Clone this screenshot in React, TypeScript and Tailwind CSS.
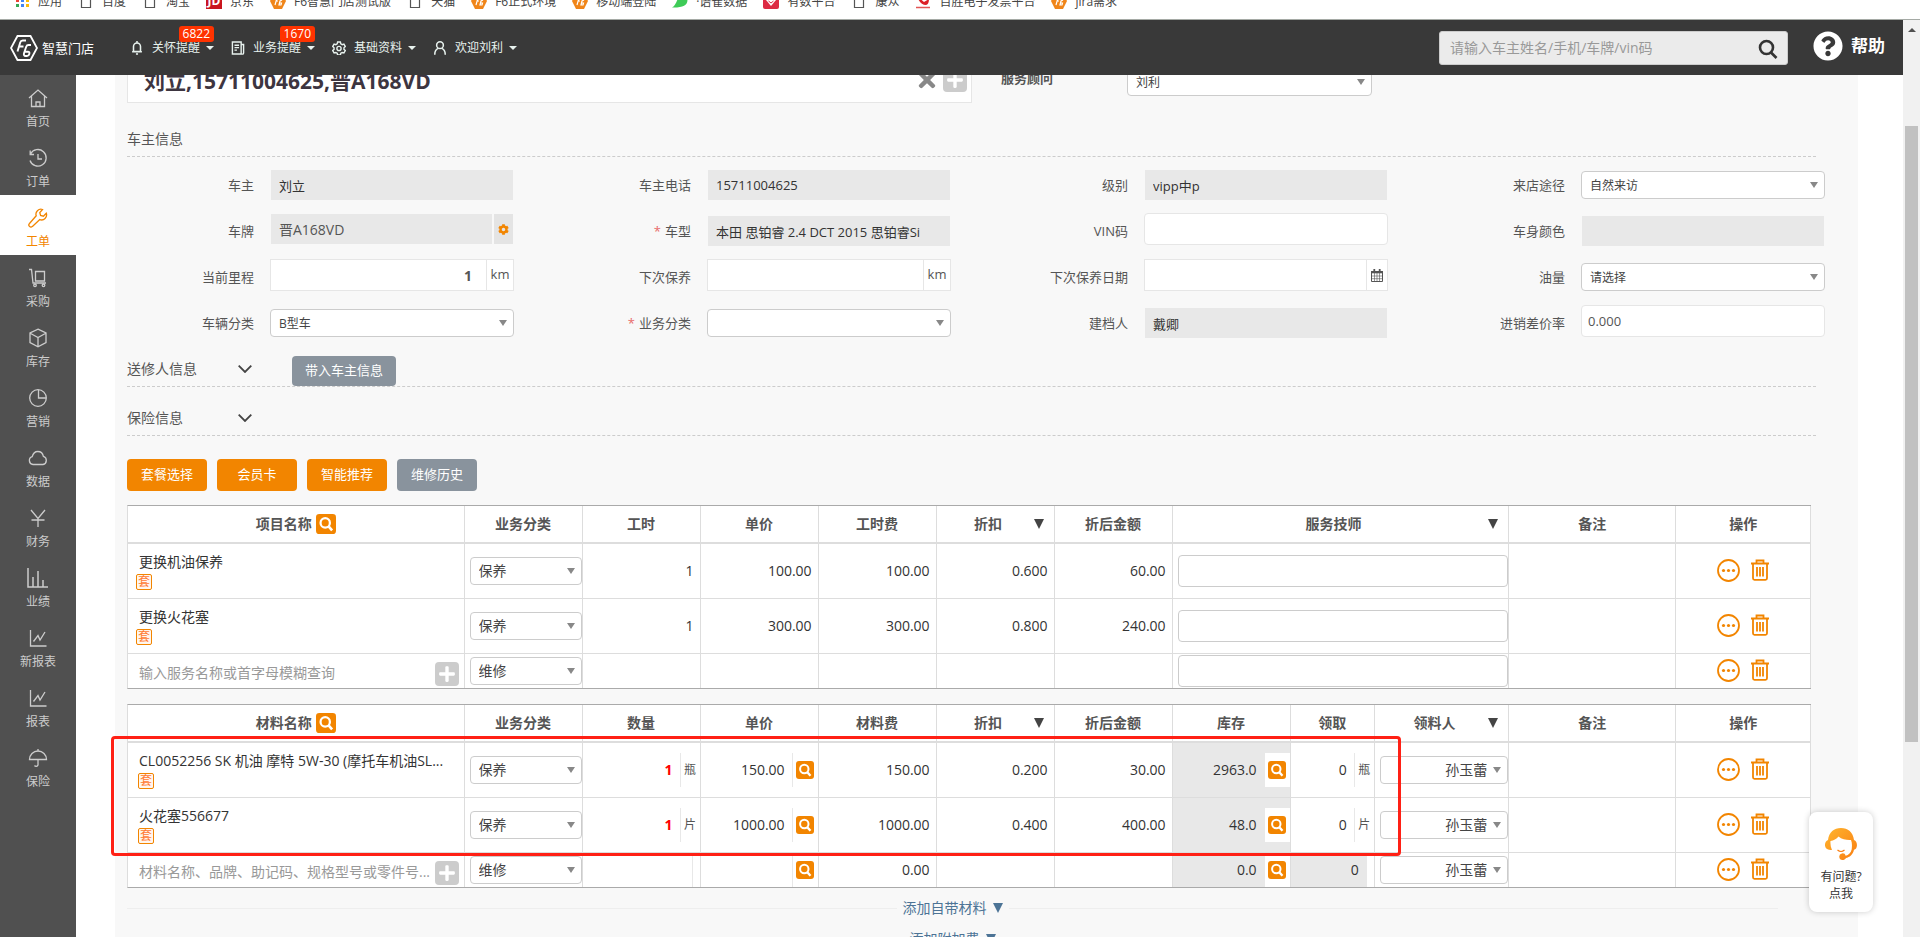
import React from "react";
import { FaCog, FaPlus, FaQuestionCircle, FaTimes } from "react-icons/fa";

/* ---------- icons ---------- */

const Svg = ({
  children,
  className = "w-5 h-5",
  width = 1.3,
}: {
  children: React.ReactNode;
  className?: string;
  width?: number;
}) => (
  <svg
    viewBox="0 0 20 20"
    className={className}
    fill="none"
    stroke="currentColor"
    strokeWidth={width}
    aria-hidden="true"
  >
    {children}
  </svg>
);

const HomeIcon = (
  <Svg>
    <path d="M1 10 10 2l9 8M3.5 8v10.500h13V8M8 18.500v-4.500h4v4.500" />
  </Svg>
);
const HistoryIcon = (
  <Svg>
    <path d="M2.500 6A8.300 8.300 0 1 1 2 12.500M2.200 2.500V6.500H6M10 6v5h4" />
  </Svg>
);
const WrenchIcon = (
  <Svg>
    <path d="M14.500 1.500a5 5 0 0 0-6.300 6.300L1.500 15.500a1.900 1.900 0 0 0 2.900 2.900l7.400-6.800a5 5 0 0 0 6.500-6.300l-2.900 2.900-2.800-.8-.8-2.800z" />
  </Svg>
);
const CartIcon = (
  <Svg>
    <path d="M1 1.500h2.500L5 15h13M7.500 3.500h9V13h-9z" />
    <circle cx="7" cy="17.300" r="1.300" />
    <circle cx="15.500" cy="17.300" r="1.300" />
  </Svg>
);
const BoxIcon = (
  <Svg>
    <path d="M10 1.200 18 5v9.500l-8 4.300-8-4.300V5zM2.200 5.300 10 9.500l7.800-4.200M10 9.500v9" />
  </Svg>
);
const PieIcon = (
  <Svg>
    <circle cx="10" cy="10" r="8.300" />
    <path d="M10.500 2v8H18" />
  </Svg>
);
const CloudIcon = (
  <Svg>
    <path d="M5 16.500a4 4 0 0 1-.8-7.800C5 5.500 7 3.500 9.800 3.500s5 2 5.600 4.900A4.200 4.200 0 0 1 15 16.500z" />
  </Svg>
);
const YenIcon = (
  <Svg>
    <path d="M3 2l7 8.500L17 2M10 10.500V19M3.500 12h13" />
  </Svg>
);
const BarsIcon = (
  <Svg className="w-[22px] h-5">
    <path d="M0 0v19h20M5 19V9M10 19V3M15 19v-7" strokeWidth="1.500" />
  </Svg>
);
const LineIcon = (
  <Svg>
    <path d="M2.500 2v16h16M5.500 13.500l4.500-6 2 4.500 5-8" />
  </Svg>
);
const UmbrellaIcon = (
  <Svg>
    <path d="M10 1v2M1.500 11.500a8.500 8.500 0 0 1 17 0zM10 11.500v5.500a2 2 0 0 1-3.500.5" />
  </Svg>
);

const BellIcon = (
  <Svg className="w-3.5 h-3.5" width={2.2}>
    <path d="M5 15V8a5 5 0 0 1 10 0v7zM3 15.300h14M8.500 18.500h3M10 0v3" />
  </Svg>
);
const NoteIcon = (
  <Svg className="w-3.5 h-3.5" width={2}>
    <path d="M2 1.500h12.500v17H2zM14.500 5H18v12a1.500 1.500 0 0 1-3.500 0M5 6h6.500M5 9.500h6.500M5 13h3.500" />
  </Svg>
);
const GearIcon = (
  <Svg className="w-3.5 h-3.5" width={2}>
    <path d="M8 1.500h4l.6 2.600 1.900 1.100 2.500-.8 2 3.500-1.900 1.800v2.200l1.900 1.800-2 3.400-2.500-.7-1.900 1.100-.6 2.500H8l-.6-2.500-1.900-1.100-2.500.7-2-3.400 1.900-1.800V9.700L1 7.900l2-3.500 2.500.8 1.900-1.100z" />
    <circle cx="10" cy="10.700" r="3" />
  </Svg>
);
const UserIcon = (
  <Svg className="w-3.5 h-3.5" width={2.2}>
    <circle cx="10" cy="6" r="4.800" />
    <path d="M2.500 19.500c0-4.500 2.500-8 5-9M17.500 19.500c0-4.500-2.500-8-5-9" />
  </Svg>
);

const CalendarIcon = () => (
  <svg viewBox="0 0 12 13" className="w-3 h-[13px]" fill="none" stroke="#555" aria-hidden="true">
    <path d="M.5 2.500h11v10H.5z" />
    <path d="M0 3.200h12" strokeWidth="2.200" />
    <path d="M3.300 0v3M8.700 0v3" strokeWidth="1.800" />
    <path d="M3.500 4v8.500M6 4v8.500M8.500 4v8.500M.5 7h11M.5 9.700h11" strokeWidth=".6" />
  </svg>
);

const HexLogo = ({ className = "" }: { className?: string }) => (
  <svg viewBox="0 0 28 26" className={className} fill="none" aria-hidden="true">
    <path d="M7.500 1h13L27 13l-6.500 12h-13L1 13z" stroke="#fff" strokeWidth="1.800" />
    <path
      d="M7.500 16.500l2.700-9q.6-2 2.500-2h3.300M8.500 11.500h5M21 10h-2.500q-1.700 0-2.300 1.700L14 18.200q-.6 2.800 1.600 2.800h1.400q1.800 0 2.300-2 .6-2.300-1.400-2.300H15"
      stroke="#fff"
      strokeWidth="1.900"
    />
  </svg>
);

const SearchBadge = ({ className = "w-[18px] h-[18px]" }: { className?: string }) => (
  <svg viewBox="0 0 18 18" className={className} aria-hidden="true">
    <rect width="18" height="18" rx="3" fill="#f28500" />
    <circle cx="8.300" cy="8" r="4.200" fill="none" stroke="#fff" strokeWidth="2" />
    <path d="M11.300 11.200l3.200 3.500" stroke="#fff" strokeWidth="2.400" />
  </svg>
);

const MoreIcon = () => (
  <svg viewBox="0 0 23 23" className="w-[23px] h-[23px]" aria-hidden="true">
    <circle cx="11.500" cy="11.500" r="10.500" fill="none" stroke="#f28500" strokeWidth="1.800" />
    <circle cx="6.500" cy="11.500" r="1.600" fill="#f28500" />
    <circle cx="11.500" cy="11.500" r="1.600" fill="#f28500" />
    <circle cx="16.500" cy="11.500" r="1.600" fill="#f28500" />
  </svg>
);

const TrashIcon = () => (
  <svg
    viewBox="0 0 18 22"
    className="w-[18px] h-[22px]"
    fill="none"
    stroke="#f28500"
    strokeWidth="1.800"
    aria-hidden="true"
  >
    <path d="M0 4.500h18M5.500 4V1.500h7V4M2 4.500v14.800q0 1.500 1.500 1.500h11q1.500 0 1.500-1.500V4.500M6 8v9.500M9 8v9.500M12 8v9.500" />
  </svg>
);

const Arrow = ({ className = "" }: { className?: string }) => (
  <svg viewBox="0 0 8 6" className={`w-2 h-1.5 fill-[#888] ${className}`} aria-hidden="true">
    <path d="M0 0h8L4 6z" />
  </svg>
);

/* ---------- data ---------- */

const bookmarks = [
  { icon: "apps", text: "应用" },
  { icon: "doc", text: "百度" },
  { icon: "doc", text: "淘宝" },
  { icon: "jd", text: "京东" },
  { icon: "f6", text: "F6智慧门店测试版" },
  { icon: "doc", text: "天猫" },
  { icon: "f6", text: "F6正式环境" },
  { icon: "f6", text: "移动端登陆" },
  { icon: "leaf", text: "·语雀数据" },
  { icon: "shield", text: "有数平台" },
  { icon: "doc", text: "康众" },
  { icon: "red", text: "百胜电子发票平台" },
  { icon: "f6", text: "jira需求" },
];

const topMenu = [
  { icon: BellIcon, text: "关怀提醒", badge: "6822" },
  { icon: NoteIcon, text: "业务提醒", badge: "1670" },
  { icon: GearIcon, text: "基础资料" },
  { icon: UserIcon, text: "欢迎刘利" },
];

const sideMenu = [
  { icon: HomeIcon, text: "首页" },
  { icon: HistoryIcon, text: "订单" },
  { icon: WrenchIcon, text: "工单", active: true },
  { icon: CartIcon, text: "采购" },
  { icon: BoxIcon, text: "库存" },
  { icon: PieIcon, text: "营销" },
  { icon: CloudIcon, text: "数据" },
  { icon: YenIcon, text: "财务" },
  { icon: BarsIcon, text: "业绩" },
  { icon: LineIcon, text: "新报表" },
  { icon: LineIcon, text: "报表" },
  { icon: UmbrellaIcon, text: "保险" },
];

type FieldType = "readonly" | "plate" | "input" | "km" | "date" | "select";

const fields: {
  id: string;
  label: string;
  type: FieldType;
  value?: string;
  required?: boolean;
}[] = [
  { id: "owner", label: "车主", type: "readonly", value: "刘立" },
  { id: "phone", label: "车主电话", type: "readonly", value: "15711004625" },
  { id: "level", label: "级别", type: "readonly", value: "vipp中p" },
  { id: "source", label: "来店途径", type: "select", value: "自然来访" },
  { id: "plate", label: "车牌", type: "plate", value: "晋A168VD" },
  {
    id: "model",
    label: "车型",
    type: "readonly",
    value: "本田 思铂睿 2.4 DCT 2015 思铂睿Si",
    required: true,
  },
  { id: "vin", label: "VIN码", type: "input" },
  { id: "color", label: "车身颜色", type: "readonly" },
  { id: "mileage", label: "当前里程", type: "km", value: "1" },
  { id: "next", label: "下次保养", type: "km" },
  { id: "nextDate", label: "下次保养日期", type: "date" },
  { id: "oil", label: "油量", type: "select", value: "请选择" },
  { id: "carType", label: "车辆分类", type: "select", value: "B型车" },
  { id: "bizType", label: "业务分类", type: "select", value: "", required: true },
  { id: "creator", label: "建档人", type: "readonly", value: "戴卿" },
  { id: "rate", label: "进销差价率", type: "input", value: "0.000" },
];

const projects = [
  { name: "更换机油保养", hours: "1", price: "100.00", fee: "100.00", discount: "0.600", total: "60.00" },
  { name: "更换火花塞", hours: "1", price: "300.00", fee: "300.00", discount: "0.800", total: "240.00" },
];

const materials = [
  {
    name: "CL0052256 SK 机油 摩特 5W-30 (摩托车机油SL...",
    unit: "瓶",
    price: "150.00",
    fee: "150.00",
    discount: "0.200",
    total: "30.00",
    stock: "2963.0",
  },
  {
    name: "火花塞556677",
    unit: "片",
    price: "1000.00",
    fee: "1000.00",
    discount: "0.400",
    total: "400.00",
    stock: "48.0",
  },
];

/* ---------- browser bookmarks ---------- */

const BookmarkIcon = ({ icon }: { icon: string }) => {
  if (icon === "apps")
    return (
      <svg viewBox="0 0 16 16" className="w-4 h-4">
        <path d="M2 1h3v3H2zM2 6h3v3H2z" fill="#ea4335" />
        <path d="M7 1h3v3H7zM2 11h3v3H2z" fill="#34a853" />
        <path d="M7 6h3v3H7zM7 11h3v3H7z" fill="#4285f4" />
        <path d="M12 1h3v3h-3zM12 6h3v3h-3zM12 11h3v3h-3z" fill="#fbbc05" />
      </svg>
    );
  if (icon === "doc")
    return (
      <svg viewBox="0 0 16 16" className="w-4 h-4">
        <path d="M3.500 1.500h9v13h-9z" fill="none" stroke="#555" strokeWidth="1.200" />
      </svg>
    );
  if (icon === "jd")
    return (
      <span className="flex h-4 w-4 items-end justify-center bg-[#c9151e] text-xs leading-4 font-bold text-white">
        JD
      </span>
    );
  if (icon === "f6")
    return (
      <svg viewBox="0 0 16 16" className="w-4 h-4">
        <path d="M4 0h8l4 8-4 8H4L0 8z" fill="#f08519" />
        <path d="M5 12l2-7h2M6 8h2M12 7l-2 1-1 4h2l.5-2H9.500" fill="none" stroke="#fff" strokeWidth="1.200" />
      </svg>
    );
  if (icon === "leaf")
    return (
      <svg viewBox="0 0 16 16" className="w-4 h-4">
        <path d="M0 14.500C5 12 5 4 9 1l6 4c2 6-3 10-15 9.500z" fill="#3ecb57" />
      </svg>
    );
  if (icon === "shield")
    return (
      <svg viewBox="0 0 16 16" className="w-4 h-4">
        <rect width="16" height="16" rx="2" fill="#dd2a43" />
        <path d="M3 7l5 6 5-6-2-2H5z" fill="#fff" />
        <path d="M5.500 8L8 10l2.500-2" fill="none" stroke="#dd2a43" />
      </svg>
    );
  return (
    <svg viewBox="0 0 16 16" className="w-4 h-4">
      <path d="M2 3c2 6 5 9 9 9 2 0 3-3 3-6L9 9z" fill="#dc1f26" />
      <path d="M1 14.500h14" stroke="#e25555" strokeWidth="1.500" />
    </svg>
  );
};

const Bookmarks = () => (
  <nav className="h-5 shrink-0 overflow-hidden border-b border-[#a5aaa5] bg-white">
    <ul className="-mt-[7px] flex gap-4 pl-3.5 text-xs leading-[18px] text-[#444]">
      {bookmarks.map((b) => (
        <li key={b.text}>
          <a href="#" className="flex gap-2">
            <BookmarkIcon icon={b.icon} />
            {b.text}
          </a>
        </li>
      ))}
    </ul>
  </nav>
);

/* ---------- header and sidebar ---------- */

const Header = () => (
  <header className="flex h-[55px] shrink-0 items-center bg-[#393939] pr-[18px] pl-2.5 text-white">
    <a href="#" className="mr-[34px] flex items-center gap-1">
      <HexLogo className="w-7 h-[26px]" />
      <span className="w-[54px] text-[13px] leading-5 whitespace-nowrap">智慧门店</span>
    </a>
    <nav className="flex gap-[17px] text-[#e8f2ee]">
      {topMenu.map((m) => (
        <button key={m.text} className="relative flex items-center text-xs leading-5">
          {m.icon}
          <span className="ml-2">{m.text}</span>
          <svg viewBox="0 0 8 4" className="ml-1.5 w-2 h-1 fill-current" aria-hidden="true">
            <path d="M0 0h8L4 4z" />
          </svg>
          {m.badge && (
            <span className="absolute -top-3 right-0 rounded-[3px] bg-[#ff3300] px-1 leading-4 text-white">
              {m.badge}
            </span>
          )}
        </button>
      ))}
    </nav>
    <div className="relative ml-auto w-[349px]">
      <input
        aria-label="搜索"
        placeholder="请输入车主姓名/手机/车牌/vin码"
        className="h-[34px] w-full rounded-[3px] border border-[#ccc] bg-[#ebebeb] px-2.5 text-sm text-[#333] placeholder:text-[#999]"
      />
      <button aria-label="查询" className="absolute top-2 right-2.5 text-[#333]">
        <Svg className="w-5 h-5" width={2.6}>
          <circle cx="8.500" cy="8.500" r="6.500" />
          <path d="M13 13.500l5.500 5.500" />
        </Svg>
      </button>
    </div>
    <a href="#" className="ml-[25px] flex items-center gap-2 pb-1 text-[17px] leading-6 font-bold">
      <FaQuestionCircle className="w-[30px] h-[30px]" />
      帮助
    </a>
  </header>
);

const Sidebar = () => (
  <aside className="w-[76px] shrink-0 bg-[#505050]">
    {sideMenu.map((s) => (
      <a
        key={s.text}
        href="#"
        className={
          s.active
            ? "flex h-[60px] flex-col items-center bg-white pt-[13px] text-[#f28500]"
            : "flex h-[60px] flex-col items-center pt-[13px] text-[#ccc]"
        }
      >
        {s.icon}
        <span className="mt-1 text-xs leading-5">{s.text}</span>
      </a>
    ))}
  </aside>
);

/* ---------- form ---------- */

const SelectBox = ({
  id,
  label,
  value,
  textClass = "pt-0.5 pl-2 text-xs",
}: {
  id?: string;
  label?: string;
  value: string;
  textClass?: string;
}) => (
  <div className="relative w-full">
    <select
      id={id}
      aria-label={label}
      className={`block h-7 w-full appearance-none rounded border border-[#ccc] bg-white text-[#444] ${textClass}`}
    >
      <option>{value}</option>
    </select>
    <Arrow className="pointer-events-none absolute top-[11px] right-[7px]" />
  </div>
);

const FieldBody = ({ f }: { f: (typeof fields)[number] }) => {
  const white = "h-8 min-w-0 flex-1 border border-[#e6e6e6] bg-white";
  switch (f.type) {
    case "select":
      return <SelectBox id={f.id} value={f.value ?? ""} />;
    case "readonly":
      return (
        <input
          id={f.id}
          readOnly
          defaultValue={f.value}
          className="mx-px h-[30px] min-w-0 flex-1 bg-[#e8e8e8] px-2 text-[13px] text-[#333]"
        />
      );
    case "plate":
      return (
        <div className="mx-px flex flex-1 gap-0.5 pb-1">
          <input
            id={f.id}
            readOnly
            defaultValue={f.value}
            className="h-[30px] min-w-0 flex-1 bg-[#e8e8e8] px-2 text-sm text-[#555]"
          />
          <button aria-label="设置" className="flex w-[19px] items-center justify-center bg-[#e4e4e4] text-[#f28500]">
            <FaCog className="w-[11px] h-[11px]" />
          </button>
        </div>
      );
    case "km":
      return (
        <div className="flex flex-1 pb-1">
          <input
            id={f.id}
            defaultValue={f.value}
            className={`${white} border-r-0 pr-3.5 text-right text-sm font-bold`}
          />
          <span className="flex h-8 w-7 items-center justify-center border border-[#e6e6e6] bg-white text-[13px]">
            km
          </span>
        </div>
      );
    case "date":
      return (
        <div className="flex flex-1 pb-1">
          <input id={f.id} className={`${white} border-r-0 px-2 text-[13px]`} />
          <button
            aria-label="选择日期"
            className="flex h-8 w-[22px] items-center justify-center border border-[#e6e6e6] bg-white"
          >
            <CalendarIcon />
          </button>
        </div>
      );
    default:
      return (
        <div className="flex flex-1 pb-1">
          <input id={f.id} defaultValue={f.value} className={`${white} rounded-sm px-1.5 text-[13px]`} />
        </div>
      );
  }
};

const Section = ({ title, children }: { title: string; children?: React.ReactNode }) => (
  <div className="mr-[42px] flex h-[31px] items-center border-b border-dashed border-[#ccc]">
    <h3 className="w-[111px] pb-1 text-sm leading-5">{title}</h3>
    <button aria-label="展开" className="mr-10 pb-1">
      <svg viewBox="0 0 14 8" className="w-3.5 h-2" fill="none" stroke="#444" strokeWidth="1.800">
        <path d="M.7.7L7 7 13.300.7" />
      </svg>
    </button>
    {children}
  </div>
);

/* ---------- tables ---------- */

const Th = ({ text, search, sort }: { text: string; search?: boolean; sort?: boolean }) => (
  <th className="border-r border-b-2 border-[#ddd] text-sm leading-5 font-bold text-[#555]">
    {sort ? (
      <div className="flex items-center pr-2.5 pl-1.5">
        <span className="flex-1">{text}</span>
        <svg viewBox="0 0 10 10" className="w-2.5 h-2.5 fill-[#444]" aria-hidden="true">
          <path d="M0 0h10L5 10z" />
        </svg>
      </div>
    ) : (
      <div className="flex items-center justify-center gap-1">
        {text}
        {search && (
          <button aria-label="查询">
            <SearchBadge className="block w-5 h-5" />
          </button>
        )}
      </div>
    )}
  </th>
);

const Td = ({
  children,
  last,
  className = "",
}: {
  children?: React.ReactNode;
  last?: boolean;
  className?: string;
}) => (
  <td className={`border-r border-[#ddd] ${last ? "" : "border-b"} ${className}`}>{children}</td>
);

const Num = ({ value, last }: { value?: string; last?: boolean }) => (
  <Td last={last} className="pr-1.5 text-right">
    {value}
  </Td>
);

const NameCell = ({ name, badgeClass }: { name: string; badgeClass: string }) => (
  <Td className="pr-1 pl-[11px]">
    <p className="truncate leading-5 text-[#333]">{name}</p>
    <span
      className={`flex h-4 w-4 items-center justify-center rounded-xs border border-[#f28500] bg-[#fff6ee] text-xs leading-3 text-[#ff7a33] ${badgeClass}`}
    >
      套
    </span>
  </Td>
);

const AddCell = ({ placeholder }: { placeholder: string }) => (
  <Td last className="pr-[5px] pl-[11px]">
    <div className="flex items-center">
      <input
        aria-label={placeholder}
        placeholder={placeholder}
        className="h-8 min-w-0 flex-1 truncate pt-0.5 pr-1 text-sm placeholder:text-[#999]"
      />
      <button aria-label="添加" className="mt-1.5 flex h-6 w-6 items-center justify-center rounded bg-[#ccc] text-white">
        <FaPlus className="w-[18px] h-[18px]" />
      </button>
    </div>
  </Td>
);

const TypeCell = ({ value, last }: { value: string; last?: boolean }) => (
  <Td last={last} className="pl-[5px]">
    <SelectBox label="业务分类" value={value} textClass="pl-2 text-sm" />
  </Td>
);

const ActionCell = ({ last }: { last?: boolean }) => (
  <Td last={last}>
    <div className="flex items-center justify-center gap-[11px] pb-0.5">
      <button aria-label="更多">
        <MoreIcon />
      </button>
      <button aria-label="删除">
        <TrashIcon />
      </button>
    </div>
  </Td>
);

// value on the left, unit or lookup button behind a thin divider
const SplitCell = ({
  value,
  valueClass = "",
  sideClass = "w-5",
  className = "",
  last,
  children,
}: {
  value?: string;
  valueClass?: string;
  sideClass?: string;
  className?: string;
  last?: boolean;
  children?: React.ReactNode;
}) => (
  <Td last={last} className={className}>
    <div className="flex h-[34px] items-center">
      <span className={`flex-1 pr-[7px] text-right ${valueClass}`}>{value}</span>
      <span
        className={`flex h-full items-center justify-center border-l border-[#e8e8e8] bg-white text-xs text-[#555] ${sideClass}`}
      >
        {children}
      </span>
    </div>
  </Td>
);

const Lookup = () => (
  <button aria-label="查询">
    <SearchBadge className="block w-[18px] h-[18px]" />
  </button>
);

const tableClass =
  "w-full table-fixed border-separate border-spacing-0 border-t border-b border-l border-t-[#aaa] border-b-[#aaa] border-l-[#ddd] bg-white text-sm leading-5 text-[#333]";

const ProjectTable = () => (
  <table className={tableClass}>
    <colgroup>
      <col className="w-[20%]" />
      <col className="w-[118px]" />
      <col className="w-[118px]" />
      <col className="w-[118px]" />
      <col className="w-[118px]" />
      <col className="w-[118px]" />
      <col className="w-[118px]" />
      <col className="w-[20%]" />
      <col />
      <col className="w-[8%]" />
    </colgroup>
    <thead>
      <tr className="h-[38px]">
        <Th text="项目名称" search />
        <Th text="业务分类" />
        <Th text="工时" />
        <Th text="单价" />
        <Th text="工时费" />
        <Th text="折扣" sort />
        <Th text="折后金额" />
        <Th text="服务技师" sort />
        <Th text="备注" />
        <Th text="操作" />
      </tr>
    </thead>
    <tbody>
      {projects.map((p) => (
        <tr key={p.name} className="h-[55px]">
          <NameCell name={p.name} badgeClass="mt-0.5 -ml-[3px]" />
          <TypeCell value="保养" />
          <Num value={p.hours} />
          <Num value={p.price} />
          <Num value={p.fee} />
          <Num value={p.discount} />
          <Num value={p.total} />
          <Td className="pl-[5px]">
            <input aria-label="服务技师" className="block h-8 w-full rounded border border-[#ccc] px-2" />
          </Td>
          <Td />
          <ActionCell />
        </tr>
      ))}
      <tr className="h-[34px]">
        <AddCell placeholder="输入服务名称或首字母模糊查询" />
        <TypeCell value="维修" last />
        <Td last />
        <Td last />
        <Td last />
        <Td last />
        <Td last />
        <Td last className="pl-[5px]">
          <input aria-label="服务技师" className="block h-8 w-full rounded border border-[#ccc] px-2" />
        </Td>
        <Td last />
        <ActionCell last />
      </tr>
    </tbody>
  </table>
);

const PersonCell = ({ last }: { last?: boolean }) => (
  <Td last={last} className="pl-[5px]">
    <SelectBox label="领料人" value="孙玉蕾" textClass="pr-5 text-right text-sm [text-align-last:right]" />
  </Td>
);

const MaterialTable = () => (
  <table className={tableClass}>
    <colgroup>
      <col className="w-[20%]" />
      <col className="w-[118px]" />
      <col className="w-[118px]" />
      <col className="w-[118px]" />
      <col className="w-[118px]" />
      <col className="w-[118px]" />
      <col className="w-[118px]" />
      <col className="w-[118px]" />
      <col className="w-[5%]" />
      <col className="w-[8%]" />
      <col />
      <col className="w-[8%]" />
    </colgroup>
    <thead>
      <tr className="h-[38px]">
        <Th text="材料名称" search />
        <Th text="业务分类" />
        <Th text="数量" />
        <Th text="单价" />
        <Th text="材料费" />
        <Th text="折扣" sort />
        <Th text="折后金额" />
        <Th text="库存" />
        <Th text="领取" />
        <Th text="领料人" sort />
        <Th text="备注" />
        <Th text="操作" />
      </tr>
    </thead>
    <tbody>
      {materials.map((m) => (
        <tr key={m.name} className="h-[55px]">
          <NameCell name={m.name} badgeClass="mt-0.5 -ml-px" />
          <TypeCell value="保养" />
          <SplitCell value="1" valueClass="font-bold text-[#f00]">
            {m.unit}
          </SplitCell>
          <SplitCell value={m.price} sideClass="w-[26px]">
            <Lookup />
          </SplitCell>
          <Num value={m.fee} />
          <Num value={m.discount} />
          <Num value={m.total} />
          <SplitCell value={m.stock} className="bg-[#e8e8e8]" sideClass="w-[26px]">
            <Lookup />
          </SplitCell>
          <SplitCell value="0">{m.unit}</SplitCell>
          <PersonCell />
          <Td />
          <ActionCell />
        </tr>
      ))}
      <tr className="h-[34px]">
        <AddCell placeholder="材料名称、品牌、助记码、规格型号或零件号..." />
        <TypeCell value="维修" last />
        <SplitCell last sideClass="w-2" />
        <SplitCell last sideClass="w-[26px]">
          <Lookup />
        </SplitCell>
        <Num last value="0.00" />
        <Td last />
        <Td last />
        <SplitCell last value="0.0" className="bg-[#e8e8e8]" sideClass="w-[26px]">
          <Lookup />
        </SplitCell>
        <SplitCell last value="0" className="bg-[#e8e8e8]" sideClass="w-2" />
        <PersonCell last />
        <Td last />
        <ActionCell last />
      </tr>
    </tbody>
  </table>
);

const MoreLine = ({ text }: { text: string }) => (
  <div className="mr-20 flex items-center gap-1.5 text-sm leading-5 text-[#4d7496]">
    <span className="h-px flex-1 bg-[#eee]" />
    <button className="flex items-center gap-1.5">
      {text}
      <svg viewBox="0 0 10 10" className="w-2.5 h-2.5 fill-[#4d7496]" aria-hidden="true">
        <path d="M0 0h10L5 10z" />
      </svg>
    </button>
    <span className="h-px flex-1 bg-[#eee]" />
  </div>
);

/* ---------- floating help ---------- */

const HelpWidget = () => (
  <a
    href="#"
    className="absolute right-[30px] bottom-[25px] flex h-[100px] w-16 flex-col items-center rounded-lg bg-white pt-4 text-xs leading-[17px] text-[#333] shadow-[0_0_6px_rgba(0,0,0,0.2)]"
  >
    <svg viewBox="0 0 32 32" className="mb-2 w-8 h-8" aria-hidden="true">
      <defs>
        <linearGradient id="hair" x1="0" y1="0" x2="1" y2="1">
          <stop offset="0" stopColor="#ffb52e" />
          <stop offset="1" stopColor="#f97e12" />
        </linearGradient>
      </defs>
      <path
        d="M3 12C4 4 9 0 16 0s12 4 13 12c3 1 3.500 5 2.500 7.500-.5 1.500-1.500 2-2.500 2.200-1 5-4.500 7.500-8 8.300-.8 1.500-2 2-3.500 2a3.300 3.300 0 1 1 3.200-4.300c2.800-.8 5.300-3 6-6.500.5-4 .3-7-.7-9.200-4 .3-9-.5-12.500-3.500C11.500 11 8.500 12.500 5.500 13c-.3 3 .2 6 1.500 9-4 0-6.500-1-7-4.500C-.2 15 .8 13 3 12z"
        fill="url(#hair)"
      />
      <path d="M12.500 22q3.500 3 7 0" fill="none" stroke="#f97e12" strokeWidth="1.200" />
    </svg>
    <span>有问题?</span>
    <span>点我</span>
  </a>
);

/* ---------- page ---------- */

const App: React.FC = () => {
  return (
    <div className="flex h-screen flex-col overflow-hidden bg-white font-['Open_Sans','Noto_Sans_CJK_SC',sans-serif] text-[#555]">
      <Bookmarks />
      <div className="flex min-h-0 flex-1">
        <div className="relative flex min-w-0 flex-1 flex-col">
          <Header />
          <div className="flex min-h-0 flex-1">
            <Sidebar />
            <main className="min-w-0 flex-1 overflow-hidden pr-[45px] pl-[39px]">
              <div className="-mt-[13px] bg-[#f8f8f8] pb-10 pl-3">
                {/* Customer */}
                <div className="flex">
                  <div className="flex h-[41px] w-[845px] items-center border border-[#e6e6e6] bg-white pr-1 pl-4">
                    <h2 className="flex-1 pb-1 text-[21px] leading-8 font-bold text-[#3d3540]">
                      刘立,15711004625,晋A168VD
                    </h2>
                    <button aria-label="清除" className="mr-1 pb-1.5 text-[#888]">
                      <FaTimes className="w-6 h-6" />
                    </button>
                    <button
                      aria-label="添加"
                      className="mb-1.5 flex h-6 w-6 items-center justify-center rounded bg-[#ccc] text-white"
                    >
                      <FaPlus className="w-[18px] h-[18px]" />
                    </button>
                  </div>
                  <label htmlFor="advisor" className="ml-[29px] w-[126px] pt-1.5 text-[13px] leading-5 font-bold">
                    服务顾问
                  </label>
                  <div className="w-[245px] pt-1.5">
                    <SelectBox id="advisor" value="刘利" />
                  </div>
                </div>

                {/* Owner info */}
                <h3 className="mt-[26px] mr-[42px] border-b border-dashed border-[#ccc] pb-[7px] text-sm leading-5">
                  车主信息
                </h3>
                <div className="mt-[5px] mr-[33px] grid grid-cols-4 gap-x-[50px]">
                  {fields.map((f) => (
                    <div key={f.id} className="flex h-[46px] items-center">
                      <label htmlFor={f.id} className="mr-4 w-[127px] shrink-0 text-right text-[13px] leading-5">
                        {f.required && <span className="mr-1 text-[#e86a6a]">*</span>}
                        {f.label}
                      </label>
                      <FieldBody f={f} />
                    </div>
                  ))}
                </div>

                <div className="mt-2.5">
                  <Section title="送修人信息">
                    <button className="h-[30px] w-26 rounded-sm bg-[#89939d] text-[13px] text-white">
                      带入车主信息
                    </button>
                  </Section>
                </div>
                <div className="mt-[18px]">
                  <Section title="保险信息" />
                </div>

                <div className="mt-[23px] flex gap-2.5 text-[13px] text-white">
                  <button className="h-8 w-20 rounded-sm bg-[#f28500]">套餐选择</button>
                  <button className="h-8 w-20 rounded-sm bg-[#f28500]">会员卡</button>
                  <button className="h-8 w-20 rounded-sm bg-[#f28500]">智能推荐</button>
                  <button className="h-8 w-20 rounded-sm bg-[#89939d]">维修历史</button>
                </div>

                {/* Tables */}
                <div className="mt-3.5 mr-[47px]">
                  <ProjectTable />
                </div>
                <div className="relative mt-[15px] mr-[47px]">
                  <MaterialTable />
                  <div className="pointer-events-none absolute top-8 right-[410px] -left-4 h-[120px] rounded-sm border-3 border-[#ff2015]" />
                </div>

                <div className="mt-2.5 flex flex-col gap-[11px]">
                  <MoreLine text="添加自带材料" />
                  <MoreLine text="添加附加费" />
                </div>
              </div>
            </main>
          </div>
          <HelpWidget />
        </div>

        {/* Scrollbar */}
        <div className="w-[17px] shrink-0 bg-[#f1f1f1] px-0.5 pt-2">
          <svg viewBox="0 0 8 4" className="mx-auto w-2 h-1 fill-[#505050]" aria-hidden="true">
            <path d="M0 4h8L4 0z" />
          </svg>
          <div className="mt-[94px] h-[616px] bg-[#c1c1c1]" />
        </div>
      </div>
    </div>
  );
};

export default App;
